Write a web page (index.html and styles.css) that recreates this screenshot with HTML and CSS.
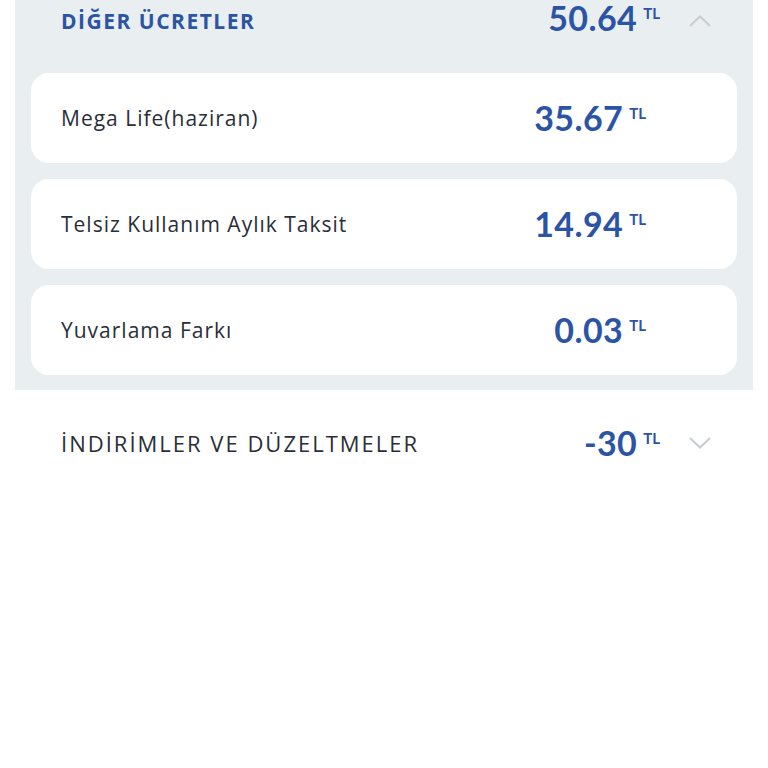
FILE: index.html
```html
<!DOCTYPE html>
<html lang="tr">
<head>
  <meta charset="UTF-8">
  <meta name="viewport" content="width=device-width, initial-scale=1.0">
  <title>Fatura Detayı</title>
  <link rel="stylesheet" href="styles.css">
</head>
<body>
  <!-- diğer ücretler (açık) -->
  <div class="group open">
    <div class="group-head">
      <span class="group-title">DİĞER ÜCRETLER</span>
      <span class="amount">50.64<sup>TL</sup></span>
      <svg class="chevron" width="22" height="12" viewBox="0 0 22 12"><path d="M1 11 L11 1.5 L21 11" fill="none" stroke="#c9cccf" stroke-width="2"/></svg>
    </div>
    <div class="items">
      <div class="item">
        <span class="item-name">Mega Life(haziran)</span>
        <span class="amount">35.67<sup>TL</sup></span>
      </div>
      <div class="item">
        <span class="item-name">Telsiz Kullanım Aylık Taksit</span>
        <span class="amount">14.94<sup>TL</sup></span>
      </div>
      <div class="item">
        <span class="item-name">Yuvarlama Farkı</span>
        <span class="amount">0.03<sup>TL</sup></span>
      </div>
    </div>
  </div>

  <!-- indirimler (kapalı) -->
  <div class="group">
    <div class="group-head">
      <span class="group-title">İNDİRİMLER VE DÜZELTMELER</span>
      <span class="amount">-30<sup>TL</sup></span>
      <svg class="chevron" width="22" height="12" viewBox="0 0 22 12"><path d="M1 1 L11 10.5 L21 1" fill="none" stroke="#c9cccf" stroke-width="2"/></svg>
    </div>
  </div>
</body>
</html>
```

FILE: styles.css
```css
body{
  margin: 0;
  background: #fff;
  font-family: "Open Sans", "Noto Sans", sans-serif;
  color: #2a2e37;
}
.group{
  margin: 0 15px;
}
.group.open{
  background: #e9eef1;
  padding-bottom: 15px;
}
.group-head{
  display: flex;
  align-items: center;
  height: 42px;
  padding: 0 42px 0 46px;
}
.group-title{
  flex: 1;
  font-size: 21px;
  font-weight: 700;
  color: #2c54a5;
  letter-spacing: 1.5px;
}
.open .group-head .amount{
  margin-top: -6px;
}
.group .group-head + .items{
  margin-top: 31px;
}
.amount{
  font-family: "Lato", sans-serif;
  font-size: 34px;
  line-height: 1;
  font-weight: 700;
  color: #2c54a5;
  letter-spacing: 0.4px;
  white-space: nowrap;
}
.amount sup{
  font-size: 15px;
  letter-spacing: 0;
  margin-left: 6px;
  vertical-align: 12px;
}
.chevron{
  margin-left: 29px;
}
.items{
  display: flex;
  flex-direction: column;
  gap: 16px;
  padding: 0 16px;
}
.item{
  display: flex;
  align-items: center;
  height: 90px;
  padding: 0 91px 0 30px;
  background: #fff;
  border-radius: 18px;
}
.item-name{
  flex: 1;
  font-size: 21px;
  letter-spacing: 1px;
}
.group:not(.open) .group-head{
  height: 106px;
}
.group:not(.open) .group-title{
  font-size: 22px;
  font-weight: 400;
  color: #2a2e37;
  letter-spacing: 2px;
}
```
